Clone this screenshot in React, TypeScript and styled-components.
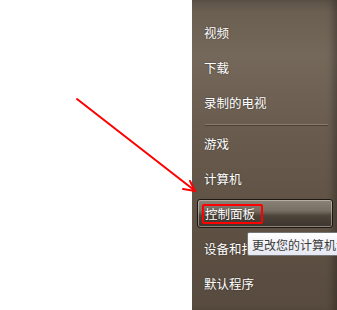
import React from "react";
import styled, { createGlobalStyle } from "styled-components";

const GlobalStyle = createGlobalStyle`
    html, body {
        margin: 0;
        padding: 0;
        background: #ffffff;
        overflow: hidden;
    }
    body {
        font-family: "Noto Sans CJK SC", "Noto Sans", sans-serif;
    }
`;

const Page = styled.div`
    position: relative;
    display: flex;
    width: 337px;
    height: 310px;
    overflow: hidden;
`;

const Blank = styled.div`
    flex: none;
    width: 192px;
`;

const Panel = styled.div`
    flex: none;
    width: 145px;
    height: 310px;
    box-sizing: border-box;
    padding-top: 15px;
    display: flex;
    flex-direction: column;
    background: linear-gradient(
        180deg,
        #5d5247 0%,
        #6b5f52 4%,
        #74685a 18%,
        #6a5d50 40%,
        #5f5245 70%,
        #574a3e 100%
    );
    box-shadow: inset -7px 0 6px -3px rgba(30, 22, 16, 0.35);
`;

const Item = styled.div<{ $active?: boolean }>`
    height: 35px;
    box-sizing: border-box;
    display: flex;
    align-items: center;
    padding: ${p => (p.$active ? "3px 4px 3px 5px" : "0 0 0 12px")};
`;

const Highlight = styled.div`
    flex: 1;
    height: 100%;
    box-sizing: border-box;
    display: flex;
    align-items: center;
    padding-left: 4px;
    border: 1px solid #1d1814;
    border-radius: 3px;
    box-shadow: inset 0 0 0 1px rgba(235, 228, 218, 0.45);
    background: linear-gradient(
        180deg,
        #8c8378 0%,
        #776e63 40%,
        #4d443b 58%,
        #3d352e 100%
    );
`;

const Label = styled.span`
    color: #ffffff;
    font-size: 12.5px;
    line-height: 16px;
    white-space: nowrap;
    text-shadow: 0 0 2px rgba(0, 0, 0, 0.45);
`;

const Marked = styled.span`
    display: inline-flex;
    align-items: center;
    height: 20px;
    box-sizing: border-box;
    padding: 0 6px 0 1px;
    border: 2px solid #ff0000;
    border-radius: 2px;
`;

const Separator = styled.div`
    height: 5px;
    display: flex;
    align-items: flex-end;
    padding: 0 9px 1px 13px;

    &::before {
        content: "";
        flex: 1;
        height: 1px;
        background: #8a7a6a;
        box-shadow: 0 1px 0 rgba(40, 30, 22, 0.45);
    }
`;

const Tooltip = styled.div`
    position: absolute;
    left: 247px;
    top: 232px;
    height: 24px;
    box-sizing: border-box;
    padding: 0 4px;
    display: flex;
    align-items: center;
    border: 1px solid #767676;
    border-radius: 2px;
    background: linear-gradient(180deg, #ffffff 0%, #e6e7f1 100%);
    color: #3b3b3b;
    font-size: 12px;
    white-space: nowrap;
`;

const Arrow = styled.svg`
    position: absolute;
    left: 0;
    top: 0;
    pointer-events: none;
`;

export const App: React.FC = () => {
    return (
        <>
            <GlobalStyle />
            <Page>
                <Blank />
                <Panel>
                    <Item><Label>视频</Label></Item>
                    <Item><Label>下载</Label></Item>
                    <Item><Label>录制的电视</Label></Item>
                    <Separator />
                    <Item><Label>游戏</Label></Item>
                    <Item><Label>计算机</Label></Item>
                    <Item $active>
                        <Highlight>
                            <Marked>
                                <Label>控制面板</Label>
                            </Marked>
                        </Highlight>
                    </Item>
                    <Item><Label>设备和打印机</Label></Item>
                    <Item><Label>默认程序</Label></Item>
                </Panel>
                <Tooltip>更改您的计算机设置并自定义其功能</Tooltip>
                <Arrow width="337" height="310" viewBox="0 0 337 310">
                    <g stroke="#ff0000" strokeWidth="2" fill="none" strokeLinecap="round">
                        <line x1="77" y1="99" x2="194" y2="190" />
                        <polyline points="183,189 195,191 190,181" />
                    </g>
                </Arrow>
            </Page>
        </>
    );
};

export default App;
